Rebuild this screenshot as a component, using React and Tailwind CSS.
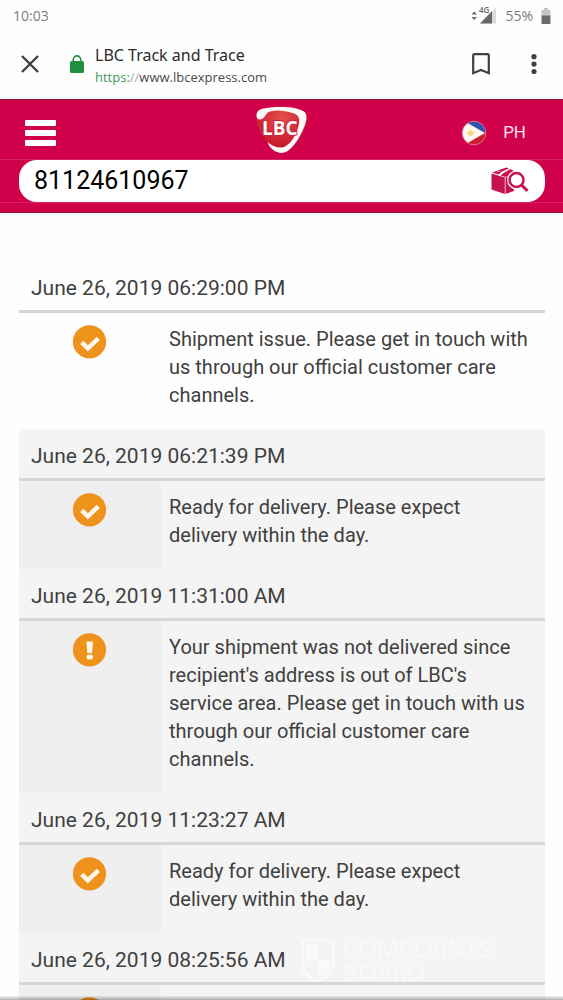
import React from "react";

const events = [
  { time: "June 26, 2019 06:29:00 PM", kind: "done", text: "Shipment issue. Please get in touch with us through our official customer care channels." },
  { time: "June 26, 2019 06:21:39 PM", kind: "done", text: "Ready for delivery. Please expect delivery within the day." },
  { time: "June 26, 2019 11:31:00 AM", kind: "alert", text: "Your shipment was not delivered since recipient's address is out of LBC's service area. Please get in touch with us through our official customer care channels." },
  { time: "June 26, 2019 11:23:27 AM", kind: "done", text: "Ready for delivery. Please expect delivery within the day." },
  { time: "June 26, 2019 08:25:56 AM", kind: "done", text: "" },
];

function StatusIcon({ kind }) {
  return (
    <svg viewBox="0 0 34 34" className="mx-auto block size-[34px]" role="img" aria-label={kind === "alert" ? "Exception" : "Completed"}>
      <circle cx="16.5" cy="16.8" r="16.6" fill="#ee921b" />
      {kind === "alert" ? (
        <g fill="#fff8ea">
          <path d="M13.400 8.400h6.600l-.9 11.600h-4.800z" />
          <rect x="13.600" y="21.400" width="6.200" height="5.200" rx="2" />
        </g>
      ) : (
        <path d="M8.800 17.400l6 5.900 10.600-10" fill="none" stroke="#fff8ea" strokeWidth="4.6" />
      )}
    </svg>
  );
}

function StatusBar() {
  return (
    <div className="flex h-[31px] items-center justify-between pl-[13px] pr-3 font-['Open_Sans',sans-serif] text-sm text-[#7c7c7c]">
      <span>10:03</span>
      <div className="flex items-center">
        <svg viewBox="0 0 26 20" className="h-5 w-[26px] overflow-visible" aria-hidden="true">
          <path d="M.5 8.500L3.200 5.500 6 8.500zM.5 11L3.200 14 6 11z" fill="#6b6b6b" />
          <path d="M9 17.500L25 1.500v16z" fill="#dadada" />
          <path d="M9 17.500L21 5v12.500z" fill="#686868" />
          <text x="8" y="7" fontSize="8" fontWeight="600" fill="#666" stroke="#fff" strokeWidth="1.4" paintOrder="stroke">4G</text>
        </svg>
        <span className="ml-2">55%</span>
        <svg viewBox="0 0 10 16" className="ml-2 h-4 w-2.5" aria-hidden="true">
          <path d="M3 0h4v2h2.500v6H.5V2H3z" fill="#c4c4c4" />
          <path d="M.5 7.500h9V15a1 1 0 0 1-1 1h-7a1 1 0 0 1-1-1z" fill="#6c6c6c" />
        </svg>
      </div>
    </div>
  );
}

function BrowserBar() {
  return (
    <div className="flex h-[68px] items-center pb-0.5 pl-[21px] pr-[26px]">
      <button type="button" aria-label="Close tab">
        <svg viewBox="0 0 18 18" className="size-[18px]" fill="none" stroke="#3f3f3f" strokeWidth="2.4">
          <path d="M1 1l16 16M17 1L1 17" />
        </svg>
      </button>
      <svg viewBox="0 0 14 18" className="ml-[31px] h-[18px] w-3.5" role="img" aria-label="Secure">
        <path d="M3.300 8V4.600a3.700 3.700 0 0 1 7.400 0V8" fill="none" stroke="#1f8f3c" strokeWidth="1.6" />
        <rect y="6" width="14" height="12" rx="1.6" fill="#1f8f3c" />
      </svg>
      <div className="ml-[11px] flex-1 pt-0.5">
        <div className="text-base leading-6 text-[#2b2b2b]">LBC Track and Trace</div>
        <div className="font-['Open_Sans',sans-serif] text-[13px] leading-5 text-[#4a4a4a]">
          <span className="text-[#3d9a5d]">https:</span>
          <span className="text-[#aaaaaa]">//</span>
          www.lbcexpress.com
        </div>
      </div>
      <button type="button" aria-label="Bookmark">
        <svg viewBox="0 0 18 22" className="h-[22px] w-[18px]" fill="none" stroke="#3f3f3f" strokeWidth="2.2">
          <path d="M1.200 20.200V2.400c0-.7.5-1.200 1.200-1.200h13.200c.7 0 1.200.5 1.200 1.200v17.800L9 17z" />
        </svg>
      </button>
      <button type="button" aria-label="More options" className="ml-[41px]">
        <svg viewBox="0 0 6 20" className="h-5 w-1.5" fill="#3f3f3f">
          <circle cx="3" cy="2.700" r="2.6" />
          <circle cx="3" cy="10.100" r="2.6" />
          <circle cx="3" cy="17.500" r="2.6" />
        </svg>
      </button>
    </div>
  );
}

function Logo() {
  return (
    <svg viewBox="0 0 52 48" className="h-12 w-[52px]" role="img" aria-label="LBC">
      <defs>
        <radialGradient id="lbcRed" cx="50%" cy="25%" r="60%">
          <stop offset="0" stopColor="#e2504a" />
          <stop offset="1" stopColor="#c8182e" />
        </radialGradient>
      </defs>
      <path d="M4 4C14-1 40-1 49 6c4 5 2 12-2 20C42 36 35 45 26 47 16 46 8 34 3 24 0 16-1 9 4 4z" fill="url(#lbcRed)" />
      <path d="M.6 10C0 5 4 3 9 2.300 22 0 40 .5 48 5.500c4 3 2.500 10-.5 17C44 31 38 41 31 45.500c-7 4-17-1-19.500-9.500 4 3.500 9 6 15 5.500C35 39 40 29 42.500 20c1.600-7 1-11-6-13C29 4.500 20 3.800 14 5.500 9 7 9 13 4.500 13.500 2 13.700.8 12.500.6 10z" fill="#fffafa" />
      <text x="6" y="29" fontFamily="Open Sans, sans-serif" fontSize="19" fontWeight="700" fill="#fff" stroke="#cf2236" strokeWidth="2" paintOrder="stroke">LBC</text>
    </svg>
  );
}

function Flag() {
  return (
    <svg viewBox="0 0 26 26" className="size-[26px]" aria-hidden="true">
      <defs>
        <clipPath id="flagRound"><circle cx="13" cy="13" r="11.500" /></clipPath>
      </defs>
      <g clipPath="url(#flagRound)">
        <path d="M0 0h26v13H0z" fill="#2f55b0" />
        <path d="M0 13h26v13H0z" fill="#c91f2e" />
        <path d="M-4-3L24 13-4 29z" fill="#fff8f0" />
      </g>
      <circle cx="9.500" cy="13" r="2.600" fill="#f4c95a" />
      <path d="M9.500 9v8M5.500 13h8" stroke="#f8dfa0" strokeWidth=".8" />
      <circle cx="13" cy="13" r="11.800" fill="none" stroke="#e88aa6" strokeWidth=".8" />
    </svg>
  );
}

function PackageSearch() {
  return (
    <svg viewBox="0 0 38 28" className="h-7 w-[38px]" aria-hidden="true">
      <path d="M.5 6.500l13.300 4V27L.5 22.500z" fill="#c91350" />
      <path d="M14.500 10.500L23 8v16l-8.500 3z" fill="#c91350" />
      <path d="M1 5.600L5.500 4 10.500 5.600 7.500 7.600zM6.500 3.600L15.500.6l2.500.9L10 5zM9.500 8.400l3.500-2.700L19.500 2l4 2.200v3l-9 2.700z" fill="#c91350" />
      <circle cx="25.500" cy="13" r="9.400" fill="#fff" />
      <circle cx="25.500" cy="13" r="7" fill="#fff" stroke="#c91350" strokeWidth="2.500" />
      <path d="M30.500 18l6 5.800" stroke="#c91350" strokeWidth="3" />
    </svg>
  );
}

function SiteHeader() {
  return (
    <header className="h-[114px] shrink-0 border-y border-[#8f1442] bg-[#d0004b] font-[Roboto,sans-serif]">
      <div className="grid h-[60px] grid-cols-[1fr_auto_1fr] items-center border-b border-[#da2462] px-[25px]">
        <button type="button" aria-label="Menu" className="mt-1.5 flex w-[31px] flex-col gap-1">
          <span className="h-1.5 rounded-[1px] bg-white" />
          <span className="h-1.5 rounded-[1px] bg-white" />
          <span className="h-1.5 rounded-[1px] bg-white" />
        </button>
        <Logo />
        <a href="#country" className="mr-3 mt-1.5 flex items-center gap-4 justify-self-end text-[17px] text-[#ffe6ee]">
          <Flag />
          PH
        </a>
      </div>
      <form className="border-b border-[#da2462] pl-[19px] pr-[18px]" onSubmit={(e) => e.preventDefault()}>
        <div className="flex h-[42px] items-center rounded-[18px] bg-white pl-[15px] pr-4">
          <input
            aria-label="Tracking number"
            defaultValue="81124610967"
            className="min-w-0 flex-1 bg-transparent text-[25px] leading-8 text-black outline-none"
          />
          <button type="submit" aria-label="Track package">
            <PackageSearch />
          </button>
        </div>
      </form>
    </header>
  );
}

function Watermark() {
  return (
    <div className="pointer-events-none absolute bottom-4 left-[301px] flex items-center gap-2 text-white/50">
      <svg viewBox="0 0 34 44" className="h-11 w-[34px]" aria-hidden="true">
        <path d="M2 4q15-5 30 0v24q0 9-15 15Q2 37 2 28z" fill="none" stroke="currentColor" strokeWidth="3" />
        <path d="M5 6h12v16H5zM17 22h12v6q0 6-12 12z" fill="currentColor" />
      </svg>
      <div className="font-['Open_Sans',sans-serif] text-2xl font-medium leading-6">
        <div>COMPLAINTS</div>
        <div>BOARD</div>
      </div>
    </div>
  );
}

export default function App() {
  return (
    <div className="relative flex h-screen flex-col overflow-hidden bg-[#fefefe] font-['Noto_Sans',sans-serif]">
      <div className="shrink-0">
        <StatusBar />
        <BrowserBar />
      </div>
      <SiteHeader />
      <main className="min-h-0 flex-1 overflow-hidden pl-[19px] pr-[18px] pt-12 font-[Roboto,sans-serif] text-[20px] text-[#404040]">
        <table className="w-full table-fixed border-collapse text-left" aria-label="Shipment history">
          <colgroup>
            <col className="w-[27%]" />
            <col />
          </colgroup>
          {events.map((event, i) => (
            <tbody key={event.time} className={i === 0 ? "" : "bg-[#f4f4f4]"}>
              <tr>
                <th colSpan={2} scope="colgroup" className="p-0 font-normal">
                  <div className="border-b-3 border-[#d6d6d6] px-3 pb-2 pt-[13px] text-[21px] leading-7">{event.time}</div>
                </th>
              </tr>
              <tr>
                <td className={i === 0 ? "p-0 pt-3 align-top" : "bg-[#efefef] p-0 pt-3 align-top"}>
                  <StatusIcon kind={event.kind} />
                </td>
                <td className="pb-5 pl-2 pr-4 pt-3 align-top leading-7">{event.text}</td>
              </tr>
            </tbody>
          ))}
        </table>
      </main>
      <Watermark />
      <div className="absolute inset-x-0 bottom-0 h-1 bg-linear-to-b from-black/5 to-black/30" />
    </div>
  );
}
